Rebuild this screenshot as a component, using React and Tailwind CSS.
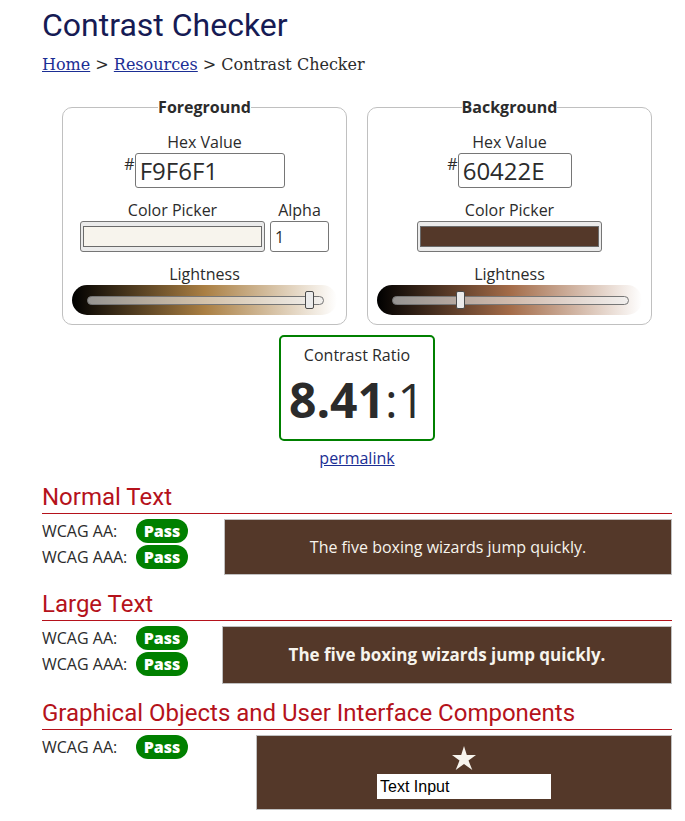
import { useState } from 'react';

const fieldBorder = 'rounded-[3px] border border-[#767676] bg-white text-[#2b2b2b]';

function Lightness({ id, value, gradient }) {
  const [level, setLevel] = useState(value);
  return (
    <div className="mt-[11px] px-[9px] text-center">
      <label htmlFor={id} className="block leading-[22px]">Lightness</label>
      <div className={`flex h-[30px] items-center rounded-full pr-[13px] pl-[15px] ${gradient}`}>
        <input
          id={id}
          type="range"
          min="0"
          max="100"
          value={level}
          onChange={(e) => setLevel(e.target.value)}
          className="h-[18px] w-full appearance-none bg-transparent [&::-webkit-slider-runnable-track]:box-border [&::-webkit-slider-runnable-track]:h-[9px] [&::-webkit-slider-runnable-track]:rounded-full [&::-webkit-slider-runnable-track]:border [&::-webkit-slider-runnable-track]:border-[#767676] [&::-webkit-slider-runnable-track]:bg-[#efefef]/60 [&::-webkit-slider-thumb]:-mt-[6px] [&::-webkit-slider-thumb]:h-[18px] [&::-webkit-slider-thumb]:w-[9px] [&::-webkit-slider-thumb]:appearance-none [&::-webkit-slider-thumb]:rounded-[2px] [&::-webkit-slider-thumb]:border [&::-webkit-slider-thumb]:border-[#4a4a4a] [&::-webkit-slider-thumb]:bg-[#ebebeb]"
        />
      </div>
    </div>
  );
}

function ColorPicker({ id, value }) {
  return (
    <div className="w-[185px]">
      <label htmlFor={id} className="block text-center leading-[22px]">Color Picker</label>
      <input
        id={id}
        type="color"
        defaultValue={value}
        className="block h-[31px] w-full appearance-none rounded-[3px] border border-[#767676] bg-[#ebebeb] px-[2px] py-[4px] [&::-webkit-color-swatch]:rounded-none [&::-webkit-color-swatch]:border [&::-webkit-color-swatch]:border-[#6b6b6b] [&::-webkit-color-swatch-wrapper]:p-0"
      />
    </div>
  );
}

function ColorPanel({ title, id, hex, hexWidth, swatch, lightness, gradient, children }) {
  return (
    <fieldset className="min-w-0 rounded-[10px] border border-[#c0c0c0] pt-3 pb-[9px]">
      <legend className="mx-auto leading-6 font-bold">{title}</legend>
      <label htmlFor={`${id}-hex`} className="block text-center leading-[22px]">Hex Value</label>
      <div className="flex items-start justify-center">
        <span className="leading-[22px]">#</span>
        <input
          id={`${id}-hex`}
          type="text"
          defaultValue={hex}
          className={`h-[35px] px-1 text-2xl ${fieldBorder} ${hexWidth}`}
        />
      </div>
      <div className="mt-[11px] flex justify-center gap-[5px]">
        <ColorPicker id={`${id}-picker`} value={swatch} />
        {children}
      </div>
      <Lightness id={`${id}-lightness`} value={lightness} gradient={gradient} />
    </fieldset>
  );
}

function Result({ level }) {
  return (
    <div className="flex items-center">
      <span className="w-[94px]">{level}:</span>
      <span className="h-6 w-[52px] rounded-full bg-[#008000] text-center leading-6 font-extrabold text-white">Pass</span>
    </div>
  );
}

function Section({ title, levels, resultsWidth, sampleStyle, children }) {
  return (
    <section>
      <h2 className="border-b border-[#b5121b] font-[Roboto,sans-serif] text-2xl leading-8 text-[#b5121b]">{title}</h2>
      <div className="mt-[5px] flex">
        <div className={`flex shrink-0 flex-col gap-[2px] ${resultsWidth}`}>
          {levels.map((level) => <Result key={level} level={level} />)}
        </div>
        <div className={`flex flex-1 flex-col items-center justify-center border border-[#c0c0c0] bg-[#543829] text-[#f7f4ed] ${sampleStyle}`}>
          {children}
        </div>
      </div>
    </section>
  );
}

export default function App() {
  return (
    <main className="bg-white pr-[13px] pb-2 pl-[42px] font-['Open_Sans',sans-serif] text-base text-[#2b2b2b]">
      <h1 className="pt-[5px] font-[Roboto,sans-serif] text-[32px] leading-10 text-[#161b54]">Contrast Checker</h1>
      <nav aria-label="Breadcrumb" className="mt-2 font-['DejaVu_Serif',serif] text-base leading-6">
        <a href="#home" className="text-[#1b2e94] underline">Home</a> &gt;{' '}
        <a href="#resources" className="text-[#1b2e94] underline">Resources</a> &gt; Contrast Checker
      </nav>
      <form className="mt-[18px] grid grid-cols-2 gap-5 px-5">
        <ColorPanel
          title="Foreground"
          id="fg"
          hex="F9F6F1"
          hexWidth="w-[150px]"
          swatch="#f7f4ed"
          lightness={96}
          gradient="bg-[linear-gradient(to_right,#000,#aa7f43,#fff)]"
        >
          <div className="w-[59px]">
            <label htmlFor="alpha" className="block text-center leading-[22px]">Alpha</label>
            <input id="alpha" type="text" defaultValue="1" className={`block h-[31px] w-full px-1 text-base ${fieldBorder}`} />
          </div>
        </ColorPanel>
        <ColorPanel
          title="Background"
          id="bg"
          hex="60422E"
          hexWidth="w-[114px]"
          swatch="#543829"
          lightness={28}
          gradient="bg-[linear-gradient(to_right,#000,#a36b48,#fff)]"
        />
      </form>
      <div className="mt-[10px] flex flex-col items-center">
        <div className="h-[106px] w-[156px] rounded-[5px] border-2 border-[#008000] pt-[6px] text-center">
          <div className="leading-6">Contrast Ratio</div>
          <div className="text-5xl leading-[66px]"><b>8.41</b>:1</div>
        </div>
        <a href="#permalink" className="mt-[5px] leading-6 text-[#1b2e94] underline">permalink</a>
      </div>
      <div className="mt-[11px] flex flex-col gap-[13px]">
        <Section title="Normal Text" levels={['WCAG AA', 'WCAG AAA']} resultsWidth="w-[182px]" sampleStyle="h-14">
          <p>The five boxing wizards jump quickly.</p>
        </Section>
        <Section title="Large Text" levels={['WCAG AA', 'WCAG AAA']} resultsWidth="w-[180px]" sampleStyle="h-[58px]">
          <p className="text-[17px] font-bold">The five boxing wizards jump quickly.</p>
        </Section>
        <Section title="Graphical Objects and User Interface Components" levels={['WCAG AA']} resultsWidth="w-[214px]" sampleStyle="h-[75px]">
          <svg aria-hidden="true" viewBox="0 0 24 24" className="size-6 fill-[#f7f4ed]">
            <path d="M12 0 14.8 9H24L16.5 14.6 20.3 24 12 18 3.7 24 7.5 14.6 0 9H9.2Z" />
          </svg>
          <input
            aria-label="Text Input"
            type="text"
            defaultValue="Text Input"
            className="mt-1 h-[25px] w-[174px] bg-white px-[3px] font-['Liberation_Sans',sans-serif] text-base text-black"
          />
        </Section>
      </div>
    </main>
  );
}
